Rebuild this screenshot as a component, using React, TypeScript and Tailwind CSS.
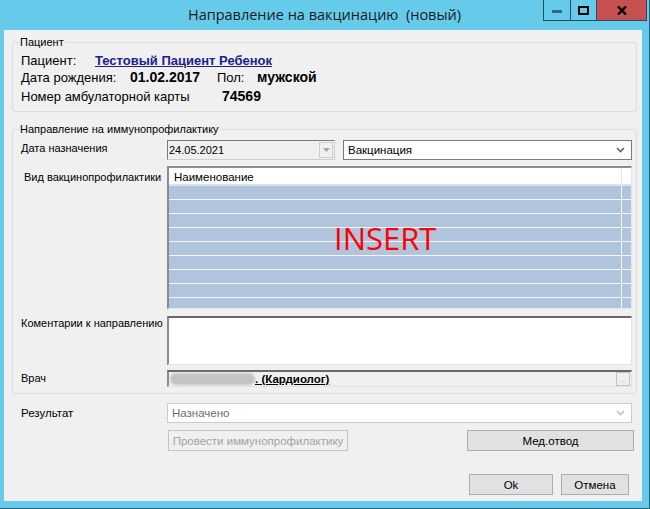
import React from 'react';

const ui = { fontFamily: '"Liberation Sans", Arial, sans-serif' };

const Chevron = ({ color }: { color: string }) => (
  <svg width="9" height="6" viewBox="0 0 9 6" className="shrink-0">
    <polyline points="1,1 4.5,4.5 8,1" fill="none" stroke={color} strokeWidth="1.6" />
  </svg>
);

const Combo = ({ value, disabled = false }: { value: string; disabled?: boolean }) => (
  <div
    className={`flex h-[20px] items-center justify-between bg-white pl-[4px] pr-[6px] text-[11.5px] border ${
      disabled ? 'border-[#cccccc] text-[#6d6d6d]' : 'border-[#7a7a7a] text-black'
    }`}
  >
    <span className="leading-[14px]">{value}</span>
    <Chevron color={disabled ? '#c2c2c2' : '#606060'} />
  </div>
);

const GroupBox = ({ title, children, className = '' }: { title: string; children: React.ReactNode; className?: string }) => (
  <fieldset className={`ml-[8px] mr-[5px] rounded-[3px] border border-[#dcdcdc] pl-[8px] pr-[4px] ${className}`}>
    <legend className="-ml-[2px] px-[1px] text-[11px] leading-[14px] whitespace-nowrap text-black">{title}</legend>
    {children}
  </fieldset>
);

const WinButton = ({ label, w, disabled = false }: { label: string; w: string; disabled?: boolean }) => (
  <div
    className={`flex h-[21px] items-center justify-center whitespace-nowrap border text-[11.5px] ${w} ${
      disabled ? 'border-[#c4c4c4] bg-[#f0f0f0] text-[#a3a3a3]' : 'border-[#adadad] bg-[#e1e1e1] text-black'
    }`}
  >
    {label}
  </div>
);

const TitleBar = () => (
  <div className="relative flex h-[30px] shrink-0 items-start justify-end">
    <div className="absolute inset-x-0 top-[5px] text-center text-[14.5px] leading-[20px] text-[#1b1b1b]" style={{ fontFamily: '"Open Sans", "Noto Sans", sans-serif' }}>
      Направление на вакцинацию&nbsp; (новый)
    </div>
    <div className="relative mr-[2px] flex h-[21px] border border-t-0 border-[#2b4e5e]">
      <div className="flex w-[27px] items-center justify-center border-r border-[#2b4e5e]">
        <div className="mt-[3px] h-[3px] w-[10px] bg-[#2d6b80]" />
      </div>
      <div className="flex w-[26px] items-center justify-center border-r border-[#2b4e5e]">
        <div className="h-[9px] w-[11px] border-2 border-black" />
      </div>
      <div className="flex w-[49px] items-center justify-center bg-[#c75050]">
        <svg width="10" height="9" viewBox="0 0 10 9">
          <path d="M1,0.5 L9,8.5 M9,0.5 L1,8.5" stroke="#000" strokeWidth="2.4" />
        </svg>
      </div>
    </div>
  </div>
);

const PatientGroup = () => (
  <GroupBox title="Пациент" className="mt-[5px] pb-[6px]">
    <div className="pt-[3px] text-[13px] whitespace-nowrap text-black">
      <div className="flex h-[17px] items-center">
        <span className="w-[74px]">Пациент:</span>
        <span className="text-[13px] font-bold text-[#20208a] underline">Тестовый Пациент Ребенок</span>
      </div>
      <div className="flex h-[17px] items-center">
        <span className="w-[109px]">Дата рождения:</span>
        <span className="w-[87px] text-[14px] font-bold">01.02.2017</span>
        <span className="w-[40px]">Пол:</span>
        <span className="text-[14px] font-bold">мужской</span>
      </div>
      <div className="mt-[2px] flex h-[17px] items-center">
        <span className="w-[201px]">Номер амбулаторной карты</span>
        <span className="text-[14px] font-bold">74569</span>
      </div>
    </div>
  </GroupBox>
);

const VaccineGrid = () => {
  const rows = Array.from({ length: 9 });
  return (
    <div className="relative h-[143px] flex-1 overflow-hidden border-l-2 border-t-2 border-b border-r border-l-[#8c8c8c] border-t-[#8c8c8c] border-b-[#e6e6e6] border-r-[#e6e6e6] bg-white">
      <div className="flex h-[18px] border-b-2 border-[#d9e3ee] bg-white">
        <div className="flex-1 border-r border-[#e3e3e3] pl-[5px] pt-[2px] text-[11.5px] leading-[14px] text-black">Наименование</div>
        <div className="w-[9px]" />
      </div>
      {rows.map((_, i) => (
        <div key={i} className="flex h-[14px] border-b border-[#f4f6fa] bg-[#b0c4de]">
          <div className="flex-1 border-r border-[#f4f6fa]" />
          <div className="w-[9px]" />
        </div>
      ))}
      <div
        className="absolute left-[165px] top-[55px] text-[31px] leading-none text-[#ff0000]"
        style={{ fontFamily: '"Open Sans", "Noto Sans", sans-serif' }}
      >
        INSERT
      </div>
    </div>
  );
};

const sunken =
  'border-l-2 border-t-2 border-b border-r border-l-[#8c8c8c] border-t-[#696969] border-b-[#e3e3e3] border-r-[#e3e3e3]';

const ReferralGroup = () => (
  <GroupBox title="Направление на иммунопрофилактику" className="mt-[10px] pb-[6px]">
    <div className="text-[11px] leading-[14px] whitespace-nowrap text-black">
      <div className="mt-[4px] flex h-[20px]">
        <span className="w-[146px] pt-[1px]">Дата назначения</span>
        <div className="flex h-[20px] w-[168px] items-center justify-between border border-t-[#7a7a7a] border-l-[#7a7a7a] border-r-[#cfcfcf] border-b-[#cfcfcf] bg-[#f0f0f0]">
          <span className="pl-[1px] text-[11px]">24.05.2021</span>
          <div className="mr-[1px] flex h-[16px] w-[14px] items-center justify-center border border-[#cdcdcd]">
            <svg width="7" height="4" viewBox="0 0 7 4">
              <polygon points="0,0 7,0 3.5,4" fill="#a6a6a6" />
            </svg>
          </div>
        </div>
        <div className="ml-[8px] flex-1">
          <Combo value="Вакцинация" />
        </div>
      </div>
      <div className="mt-[6px] flex">
        <span className="w-[146px] pl-[3px] pt-[4px]">Вид вакцинопрофилактики</span>
        <VaccineGrid />
      </div>
      <div className="mt-[7px] flex">
        <span className="w-[146px]">Коментарии к направлению</span>
        <div className={`h-[49px] flex-1 bg-white ${sunken}`} />
      </div>
      <div className="mt-[5px] flex">
        <span className="w-[146px] pt-[1px]">Врач</span>
        <div className={`flex h-[17px] flex-1 items-center bg-[#f0f0f0] ${sunken}`}>
          <div className="ml-[1px] h-[12px] w-[85px] rounded-full bg-[#c3c3c3] blur-[1px]" />
          <span className="text-[11.5px] font-bold underline">. (Кардиолог)</span>
          <div className="ml-auto mr-[1px] flex h-[14px] w-[14px] items-end justify-center border border-[#c4c4c4] pb-[2px] text-[8px] leading-[6px] text-[#b0b0b0]">
            ...
          </div>
        </div>
      </div>
    </div>
  </GroupBox>
);

export default function App() {
  return (
    <div className="flex h-[509px] w-[650px] flex-col border-r border-b border-[#2a5f75] bg-[#66cbea]" style={ui}>
      <TitleBar />
      <div className="mb-[7px] ml-[4px] mr-[7px] flex flex-1 flex-col bg-[#f0f0f0]">
        <PatientGroup />
        <ReferralGroup />
        <div className="ml-[17px] mr-[10px] text-[11.5px] leading-[14px] text-black">
          <div className="mt-[9px] flex items-center">
            <span className="w-[146px]">Результат</span>
            <div className="flex-1">
              <Combo value="Назначено" disabled />
            </div>
          </div>
          <div className="mt-[7px] flex">
            <div className="ml-[147px]">
              <WinButton label="Провести иммунопрофилактику" w="w-[180px]" disabled />
            </div>
            <div className="ml-auto mr-[-2px]">
              <WinButton label="Мед.отвод" w="w-[167px]" />
            </div>
          </div>
          <div className="mt-[23px] flex justify-end gap-[8px] pr-[3px]">
            <WinButton label="Ok" w="w-[84px]" />
            <WinButton label="Отмена" w="w-[68px]" />
          </div>
        </div>
      </div>
    </div>
  );
}
